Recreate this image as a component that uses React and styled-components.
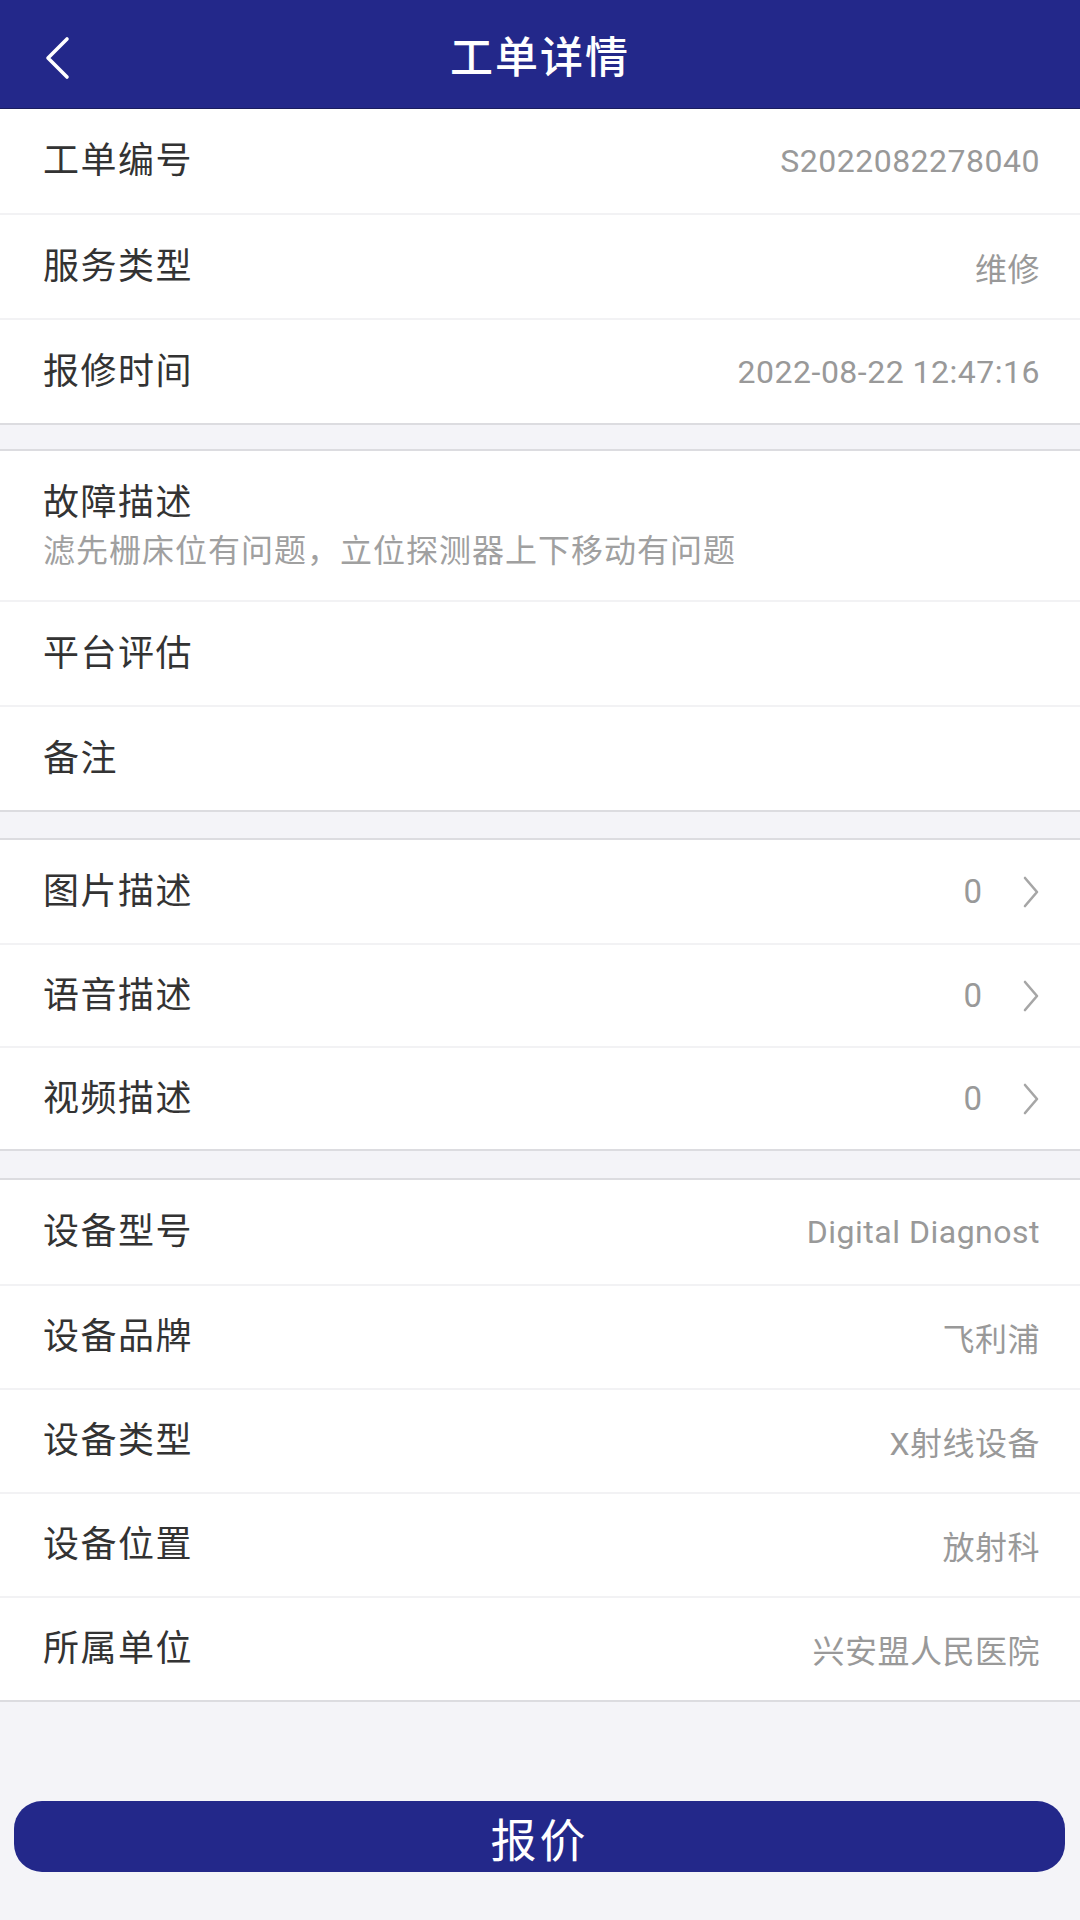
import React from 'react'
import styled, { createGlobalStyle } from 'styled-components'

const GlobalStyle = createGlobalStyle`
  html, body {
    margin: 0;
    padding: 0;
    background: #f4f4f8;
  }
  * {
    box-sizing: border-box;
  }
`

const basicInfo = [
  { label: '工单编号', value: 'S2022082278040' },
  { label: '服务类型', value: '维修' },
  { label: '报修时间', value: '2022-08-22 12:47:16' },
]

const mediaInfo = [
  { label: '图片描述', count: 0 },
  { label: '语音描述', count: 0 },
  { label: '视频描述', count: 0 },
]

const deviceInfo = [
  { label: '设备型号', value: 'Digital Diagnost' },
  { label: '设备品牌', value: '飞利浦' },
  { label: '设备类型', value: 'X射线设备' },
  { label: '设备位置', value: '放射科' },
  { label: '所属单位', value: '兴安盟人民医院' },
]

function BackIcon() {
  return (
    <svg width="30" height="44" viewBox="0 0 30 44" fill="none">
      <path d="M25 3 L6 22 L25 41" stroke="#fff" strokeWidth="3.6" strokeLinecap="round" strokeLinejoin="round" />
    </svg>
  )
}

function Chevron() {
  return (
    <svg width="18" height="32" viewBox="0 0 18 32" fill="none">
      <path d="M3 2 L15 16 L3 30" stroke="#a6a6a6" strokeWidth="2.6" strokeLinecap="round" strokeLinejoin="round" />
    </svg>
  )
}

export default function App() {
  return (
    <Page>
      <GlobalStyle />
      <Header>
        <BackButton>
          <BackIcon />
        </BackButton>
        <Title>工单详情</Title>
      </Header>

      <Group>
        {basicInfo.map(item => (
          <Row key={item.label} $h={105}>
            <Label>{item.label}</Label>
            <Value>{item.value}</Value>
          </Row>
        ))}
      </Group>

      <Group $gap={24}>
        <DescRow>
          <Label>故障描述</Label>
          <Desc>滤先栅床位有问题，立位探测器上下移动有问题</Desc>
        </DescRow>
        <Row $h={105}>
          <Label>平台评估</Label>
        </Row>
        <Row $h={105}>
          <Label>备注</Label>
        </Row>
      </Group>

      <Group $gap={26}>
        {mediaInfo.map(item => (
          <Row key={item.label} $h={103}>
            <Label>{item.label}</Label>
            <LinkSide>
              <Count>{item.count}</Count>
              <Chevron />
            </LinkSide>
          </Row>
        ))}
      </Group>

      <Group $gap={27}>
        {deviceInfo.map(item => (
          <Row key={item.label} $h={104}>
            <Label>{item.label}</Label>
            <Value>{item.value}</Value>
          </Row>
        ))}
      </Group>

      <Footer>
        <QuoteButton>报价</QuoteButton>
      </Footer>
    </Page>
  )
}

const Page = styled.div`
  width: 1080px;
  min-height: 1920px;
  background: #f4f4f8;
  font-family: Roboto, 'Noto Sans CJK SC', sans-serif;
  display: flex;
  flex-direction: column;
`

const Header = styled.header`
  height: 108px;
  background: #23288a;
  display: flex;
  align-items: center;
  justify-content: center;
  position: relative;
  box-shadow: 0 1px 0 #1a1d5e;
`

const BackButton = styled.div`
  position: absolute;
  left: 42px;
  top: 36px;
  display: flex;
`

const Title = styled.h1`
  margin: 0;
  color: #fff;
  font-size: 43px;
  font-weight: 500;
  letter-spacing: 2px;
`

const Group = styled.section`
  margin-top: ${p => p.$gap || 0}px;
  background: #fff;
  border-top: ${p => (p.$gap ? '2px solid #dcdce0' : 'none')};
  border-bottom: 2px solid #dcdce0;
  display: flex;
  flex-direction: column;
`

const Row = styled.div`
  height: ${p => p.$h}px;
  padding: 0 40px 0 43px;
  display: flex;
  align-items: center;
  justify-content: space-between;
  & + & {
    border-top: 2px solid #f2f2f4;
  }
`

const DescRow = styled.div`
  height: 149px;
  padding: 32px 40px 0 43px;
  display: flex;
  flex-direction: column;
  gap: 8px;
  & + ${Row} {
    border-top: 2px solid #f2f2f4;
  }
`

const Label = styled.span`
  color: #333;
  font-size: 36px;
  letter-spacing: 1.5px;
  line-height: 40px;
`

const Value = styled.span`
  color: #999;
  font-size: 32px;
  letter-spacing: 0.5px;
`

const Desc = styled.span`
  color: #a0a0a0;
  font-size: 32px;
  letter-spacing: 1px;
  line-height: 40px;
`

const LinkSide = styled.div`
  display: flex;
  align-items: center;
  gap: 40px;
`

const Count = styled.span`
  color: #999;
  font-size: 33px;
`

const Footer = styled.div`
  padding: 99px 15px 48px 14px;
`

const QuoteButton = styled.button`
  width: 100%;
  height: 71px;
  border: none;
  border-radius: 28px;
  background: #23288a;
  color: #fff;
  font-family: Roboto, 'Noto Sans CJK SC', sans-serif;
  font-size: 46px;
  letter-spacing: 3px;
  display: flex;
  align-items: center;
  justify-content: center;
`
